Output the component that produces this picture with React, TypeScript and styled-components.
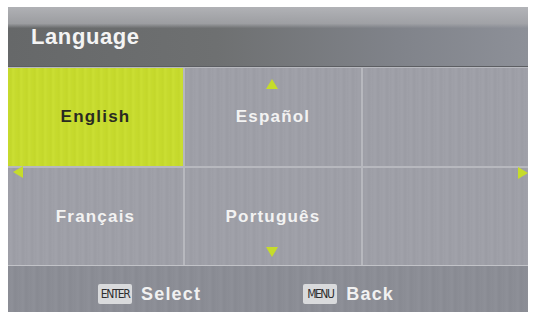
import styled, { createGlobalStyle } from "styled-components";
import { FC } from "react";

const Global = createGlobalStyle`
  html, body {
    margin: 0;
    padding: 0;
    background: #ffffff;
    font-family: "Liberation Sans", Arial, sans-serif;
  }
`;

const Screen = styled.div`
  margin: 7px 0 0 8px;
  width: 520px;
  height: 305px;
  display: flex;
  flex-direction: column;
  background: #a3a4ab;
`;

const Header = styled.div`
  height: 60px;
  display: flex;
  align-items: center;
  padding-left: 23px;
  padding-top: 1px;
  box-sizing: border-box;
  border-bottom: 1px solid #5c5e62;
  background:
    linear-gradient(180deg, rgba(182, 183, 187, 0.92) 0%, rgba(165, 166, 170, 0.85) 28%, rgba(0, 0, 0, 0) 36%),
    linear-gradient(90deg, #666869 0%, #6e7071 40%, #80838a 75%, #8d9098 100%);
`;

const Title = styled.h1`
  margin: 0;
  color: #f4f4f4;
  font-size: 22px;
  font-weight: bold;
  letter-spacing: 0.6px;
`;

const Grid = styled.div`
  display: grid;
  grid-template-columns: 175px 176px 165px;
  grid-template-rows: 98px 97px;
  gap: 2px;
  padding-top: 1px;
  background: #b7b8be;
`;

const Cell = styled.div<{ $active?: boolean }>`
  position: relative;
  display: flex;
  align-items: center;
  justify-content: center;
  font-size: 17px;
  font-weight: bold;
  letter-spacing: 1.2px;
  color: ${(p) => (p.$active ? "#2a2a22" : "#f2f2f2")};
  background: ${(p) =>
    p.$active
      ? "repeating-linear-gradient(90deg, #c7db2d 0px, #c3d72b 3px, #cbdf33 5px, #c5d92e 8px)"
      : "repeating-linear-gradient(90deg, #9d9ea6 0px, #a1a2aa 3px, #9b9ca4 6px, #a0a1a9 9px)"};
`;

const Arrow = styled.span<{ $dir: "up" | "down" | "left" | "right" }>`
  position: absolute;
  width: 0;
  height: 0;
  border: 6px solid transparent;
  ${(p) => p.$dir === "up" && "border-bottom: 10px solid #c6dc2a; border-top: 0; top: 11px; left: 81px;"}
  ${(p) => p.$dir === "down" && "border-top: 10px solid #c6dc2a; border-bottom: 0; bottom: 8px; left: 81px;"}
  ${(p) => p.$dir === "left" && "border-right: 10px solid #c6dc2a; border-left: 0; top: -2px; left: 5px;"}
  ${(p) => p.$dir === "right" && "border-left: 10px solid #c6dc2a; border-right: 0; top: -1px; right: 0px;"}
`;

const Footer = styled.div`
  flex: 1;
  display: flex;
  align-items: center;
  padding: 10px 0 0 90px;
  gap: 102px;
  border-top: 1px solid #c2c3c8;
  background: repeating-linear-gradient(90deg, #8a8c94 0px, #8e9098 4px, #888a92 7px, #8c8e96 11px);
`;

const Hint = styled.div`
  display: flex;
  align-items: center;
  gap: 9px;
`;

const Key = styled.span`
  display: inline-flex;
  align-items: center;
  justify-content: center;
  width: 34px;
  height: 20px;
  border-radius: 2px;
  background: #d9dadc;
  color: #2e2e30;
  font-size: 12px;
  letter-spacing: -1.5px;
  font-family: "DejaVu Sans Condensed", "Liberation Sans", sans-serif;
`;

const HintLabel = styled.span`
  color: #f1f1f1;
  font-size: 18px;
  font-weight: bold;
  letter-spacing: 1.2px;
`;

const App: FC = () => {
  return (
    <>
      <Global />
      <Screen>
        <Header>
          <Title>Language</Title>
        </Header>
        <Grid>
          <Cell $active>English</Cell>
          <Cell>
            <Arrow $dir="up" />
            Español
          </Cell>
          <Cell />
          <Cell>
            <Arrow $dir="left" />
            Français
          </Cell>
          <Cell>
            Português
            <Arrow $dir="down" />
          </Cell>
          <Cell>
            <Arrow $dir="right" />
          </Cell>
        </Grid>
        <Footer>
          <Hint>
            <Key>ENTER</Key>
            <HintLabel>Select</HintLabel>
          </Hint>
          <Hint>
            <Key>MENU</Key>
            <HintLabel>Back</HintLabel>
          </Hint>
        </Footer>
      </Screen>
    </>
  );
};

export default App;
